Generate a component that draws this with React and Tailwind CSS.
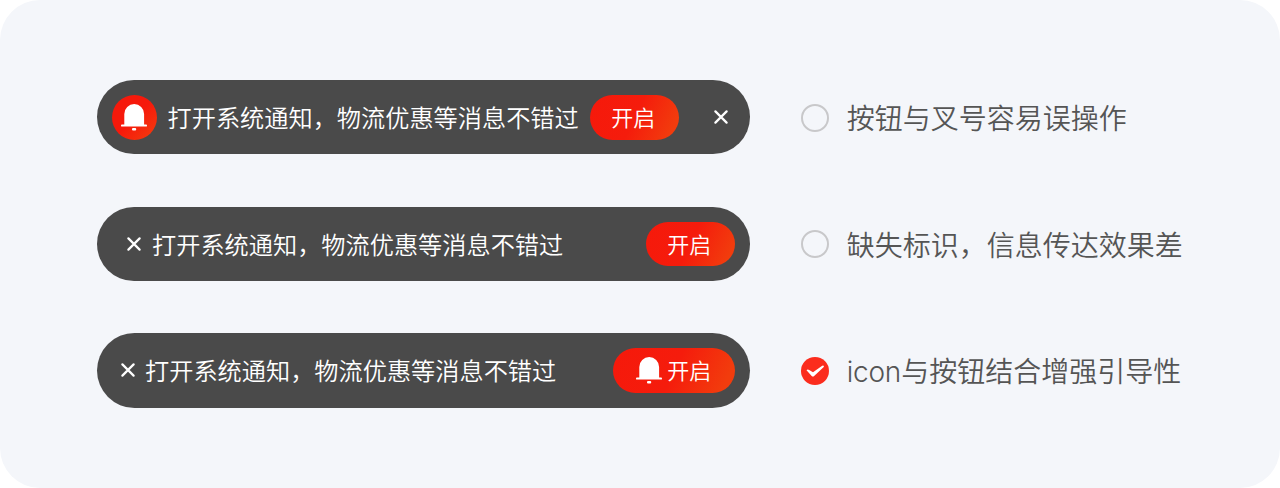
import React from "react";
import clsx from "clsx";

const TIP = "打开系统通知，物流优惠等消息不错过";

function Bell({ className }) {
  return (
    <svg viewBox="0 0 26 27" fill="#fff" className={clsx("h-[27px] w-[26px] shrink-0", className)}>
      <path d="M3.3 20.6V10a9.9 9.9 0 0 1 19.8 0v10.6h2a.9.9 0 0 1 .9.9v.2a.9.9 0 0 1-.9.9H.9a.9.9 0 0 1-.9-.9v-.2a.9.9 0 0 1 .9-.9z" />
      <rect x="11" y="24" width="4.2" height="2.5" rx="1.1" />
    </svg>
  );
}

function Cross({ className }) {
  return (
    <svg viewBox="0 0 14 14" fill="none" stroke="#fff" strokeWidth="2.2" strokeLinecap="round" className={clsx("h-[14px] w-[14px] shrink-0", className)}>
      <path d="M1.4 1.4l11.2 11.2M12.6 1.4L1.4 12.6" />
    </svg>
  );
}

function Bar({ className, children }) {
  return (
    <div className={clsx("flex h-[74.2px] w-[653.4px] shrink-0 items-center rounded-full bg-[#4a4a4a] pr-[15px] text-white", className)}>
      {children}
    </div>
  );
}

function Tip({ className }) {
  return <span className={clsx("whitespace-nowrap pt-[4px] text-[24.2px] leading-none", className)}>{TIP}</span>;
}

function OpenButton({ className, children }) {
  return (
    <button
      type="button"
      className={clsx(
        "flex h-[44.5px] shrink-0 items-center justify-center rounded-full bg-[linear-gradient(115deg,#f6190b_0%,#f51c0c_50%,#f23c0d_90%)] text-[22px] leading-none",
        className
      )}
    >
      {children}
      <span className="pt-[2px]">开启</span>
    </button>
  );
}

function Verdict({ checked, children }) {
  return (
    <div className="ml-[50.3px] flex items-center pt-[1px] text-[28px] leading-none text-[#555]">
      {checked ? (
        <svg viewBox="0 0 28 28" className="h-7 w-7 shrink-0">
          <circle cx="14" cy="14" r="14" fill="#fb2c1d" />
          <path d="M5.5 13.2Q6.6 11.9 8.2 13L12 15.3L21.2 8.8Q22.5 8.1 22.9 9.2Q23 10 22.2 10.6L12.9 19.2Q11.7 20.1 10.7 18.9z" fill="#fff" />
        </svg>
      ) : (
        <span className="h-7 w-7 shrink-0 rounded-full border-2 border-[#c8c8ca]" />
      )}
      <span className="ml-[18px] whitespace-nowrap pt-[3px]">{children}</span>
    </div>
  );
}

export default function App() {
  return (
    <div className="h-[488px] w-[1280px] bg-white">
      <div className="flex h-full flex-col gap-[52.4px] rounded-[40px] bg-[#f4f6fa] pt-[80.2px] pl-[97px] font-['Inter','Noto_Sans_CJK_SC',sans-serif] font-[350]">
        <div className="flex items-center">
          <Bar className="pl-[15px]">
            <span className="flex h-[44.5px] w-[44.5px] shrink-0 items-center justify-center rounded-full bg-[linear-gradient(135deg,#f6190b_50%,#f33f0e_100%)]">
              <Bell className="mt-px" />
            </span>
            <Tip className="ml-[11px]" />
            <OpenButton className="ml-[11.5px] w-[89px] pr-[3px]" />
            <Cross className="ml-auto mr-[7px]" />
          </Bar>
          <Verdict>按钮与叉号容易误操作</Verdict>
        </div>

        <div className="flex items-center">
          <Bar className="pl-[30px]">
            <Cross />
            <Tip className="ml-[11px]" />
            <OpenButton className="ml-auto w-[89.5px] pr-[3px]" />
          </Bar>
          <Verdict>缺失标识，信息传达效果差</Verdict>
        </div>

        <div className="flex items-center">
          <Bar className="pl-[24px]">
            <Cross />
            <Tip className="ml-[10px]" />
            <OpenButton className="ml-auto w-[122.5px] pr-[1px]">
              <Bell className="mt-px mr-[5px]" />
            </OpenButton>
          </Bar>
          <Verdict checked>
            <span className="tracking-[-0.2px]">icon</span>与按钮结合增强引导性
          </Verdict>
        </div>
      </div>
    </div>
  );
}
